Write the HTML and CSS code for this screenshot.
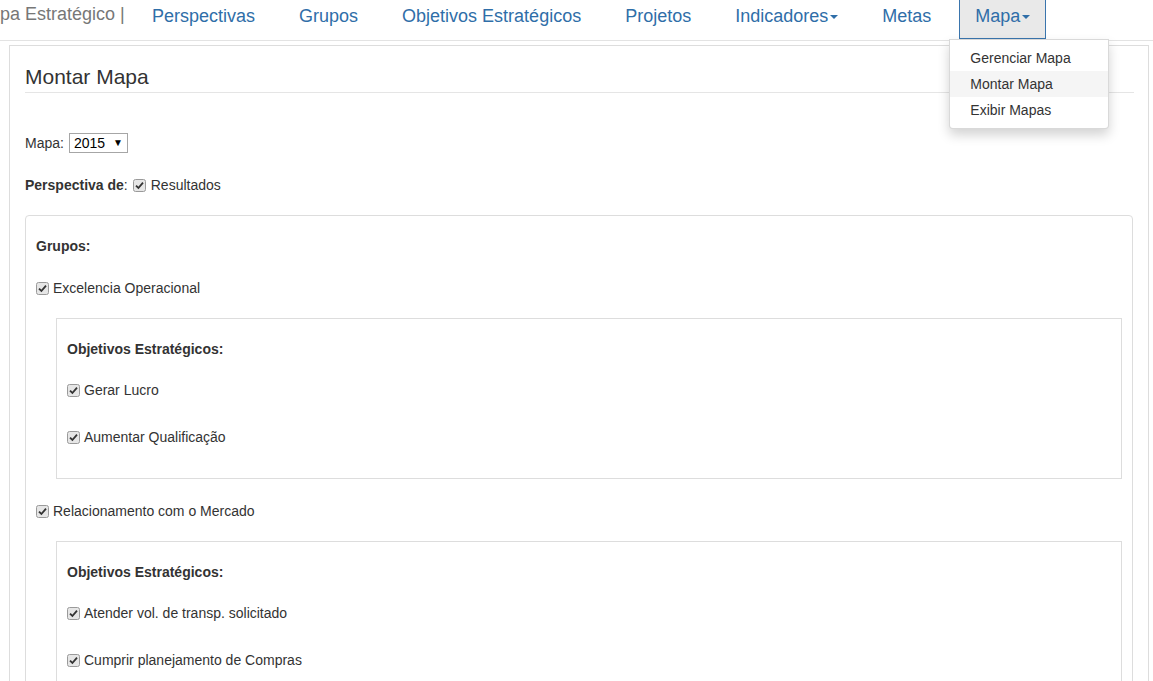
FILE: index.html
```html
<!DOCTYPE html>
<html lang="pt">
<head>
<meta charset="utf-8">
<title>Montar Mapa</title>
<link rel="stylesheet" href="styles.css">
</head>
<body>
<nav class="navbar">
  <span class="brand">pa Estratégico |</span>
  <ul class="nav">
    <li><a class="nav-link">Perspectivas</a></li>
    <li><a class="nav-link">Grupos</a></li>
    <li><a class="nav-link">Objetivos Estratégicos</a></li>
    <li><a class="nav-link">Projetos</a></li>
    <li><a class="nav-link">Indicadores<span class="caret"></span></a></li>
    <li><a class="nav-link">Metas</a></li>
    <li class="dropdown">
      <a class="nav-link active">Mapa<span class="caret"></span></a>
      <ul class="dropdown-menu">
        <li><a class="dd-item">Gerenciar Mapa</a></li>
        <li><a class="dd-item hover">Montar Mapa</a></li>
        <li><a class="dd-item">Exibir Mapas</a></li>
      </ul>
    </li>
  </ul>
</nav>

<main class="page">
  <div class="legend">Montar Mapa</div>

  <div class="field-row">
    <span>Mapa:</span>
    <span class="select-wrap">
      <select class="select"><option>2015</option></select>
    </span>
  </div>

  <div class="persp-row">
    <b>Perspectiva de</b><span>:</span>
    <svg class="cb cb-persp" viewBox="0 0 13 13" width="13" height="13"><rect x="0.5" y="0.5" width="12" height="12" rx="2" fill="#e6e6e6" stroke="#9a9a9a"/><path d="M3 6.6 L5.4 9 L10 3.6" fill="none" stroke="#333" stroke-width="1.8"/></svg>
    <span>Resultados</span>
  </div>

  <div class="panel">
    <div class="label-bold">Grupos:</div>

    <div class="check-row">
      <svg class="cb" viewBox="0 0 13 13" width="13" height="13"><rect x="0.5" y="0.5" width="12" height="12" rx="2" fill="#e6e6e6" stroke="#9a9a9a"/><path d="M3 6.6 L5.4 9 L10 3.6" fill="none" stroke="#333" stroke-width="1.8"/></svg>
      <span>Excelencia Operacional</span>
    </div>

    <div class="obj-box">
      <div class="label-bold">Objetivos Estratégicos:</div>
      <div class="check-row obj-first">
        <svg class="cb" viewBox="0 0 13 13" width="13" height="13"><rect x="0.5" y="0.5" width="12" height="12" rx="2" fill="#e6e6e6" stroke="#9a9a9a"/><path d="M3 6.6 L5.4 9 L10 3.6" fill="none" stroke="#333" stroke-width="1.8"/></svg>
        <span>Gerar Lucro</span>
      </div>
      <div class="check-row obj-next">
        <svg class="cb" viewBox="0 0 13 13" width="13" height="13"><rect x="0.5" y="0.5" width="12" height="12" rx="2" fill="#e6e6e6" stroke="#9a9a9a"/><path d="M3 6.6 L5.4 9 L10 3.6" fill="none" stroke="#333" stroke-width="1.8"/></svg>
        <span>Aumentar Qualificação</span>
      </div>
    </div>

    <div class="check-row">
      <svg class="cb" viewBox="0 0 13 13" width="13" height="13"><rect x="0.5" y="0.5" width="12" height="12" rx="2" fill="#e6e6e6" stroke="#9a9a9a"/><path d="M3 6.6 L5.4 9 L10 3.6" fill="none" stroke="#333" stroke-width="1.8"/></svg>
      <span>Relacionamento com o Mercado</span>
    </div>

    <div class="obj-box">
      <div class="label-bold">Objetivos Estratégicos:</div>
      <div class="check-row obj-first">
        <svg class="cb" viewBox="0 0 13 13" width="13" height="13"><rect x="0.5" y="0.5" width="12" height="12" rx="2" fill="#e6e6e6" stroke="#9a9a9a"/><path d="M3 6.6 L5.4 9 L10 3.6" fill="none" stroke="#333" stroke-width="1.8"/></svg>
        <span>Atender vol. de transp. solicitado</span>
      </div>
      <div class="check-row obj-next">
        <svg class="cb" viewBox="0 0 13 13" width="13" height="13"><rect x="0.5" y="0.5" width="12" height="12" rx="2" fill="#e6e6e6" stroke="#9a9a9a"/><path d="M3 6.6 L5.4 9 L10 3.6" fill="none" stroke="#333" stroke-width="1.8"/></svg>
        <span>Cumprir planejamento de Compras</span>
      </div>
    </div>
  </div>
</main>
</body>
</html>
```

FILE: styles.css
```css
html, body {
  margin: 0;
  padding: 0;
  background: #fff;
}

body {
  font-family: "Liberation Sans", Arial, sans-serif;
  font-size: 14px;
  line-height: 20px;
  color: #333;
}

/* ---------- navbar ---------- */
.navbar {
  display: flex;
  height: 40px;
  border-bottom: 1px solid #e3e3e3;
  background: #fff;
  position: relative;
  z-index: 10;
}

.brand {
  width: 136px;
  flex: none;
  font-size: 18px;
  line-height: 20px;
  padding-top: 4px;
  color: #777;
  white-space: nowrap;
  overflow: hidden;
}

.nav {
  display: flex;
  gap: 12px;
  list-style: none;
  margin: 0;
  padding: 0;
}

.nav > li {
  position: relative;
}

.nav-link {
  display: block;
  margin-top: -1px;
  padding: 6px 15px 12px;
  border: 1px solid transparent;
  font-size: 18px;
  line-height: 20px;
  color: #2f6ea8;
  white-space: nowrap;
  cursor: pointer;
}

.nav-link.active {
  background: #e9e9e9;
  border-color: #3a75ad;
}

.caret {
  display: inline-block;
  width: 0;
  height: 0;
  margin-left: 2px;
  vertical-align: middle;
  border-top: 4px solid;
  border-left: 4px solid transparent;
  border-right: 4px solid transparent;
}

.dropdown-menu {
  position: absolute;
  top: 39px;
  left: -10px;
  min-width: 160px;
  box-sizing: border-box;
  margin: 0;
  padding: 5px 0;
  list-style: none;
  background: #fff;
  border: 1px solid rgba(0, 0, 0, 0.15);
  border-radius: 0 0 4px 4px;
  box-shadow: 0 6px 12px rgba(0, 0, 0, 0.175);
}

.dd-item {
  display: block;
  padding: 3px 20px;
  line-height: 20px;
  font-size: 14px;
  color: #333;
  white-space: nowrap;
}

.dd-item.hover {
  background: #f5f5f5;
}

/* ---------- page ---------- */
.page {
  margin: 4px 4px 0 9px;
  border: 1px solid #ddd;
  border-bottom: none;
  padding: 16px 14px 40px 15px;
}

.legend {
  font-size: 21px;
  line-height: 30px;
  border-bottom: 1px solid #e5e5e5;
}

.field-row {
  display: flex;
  align-items: center;
  height: 20px;
  margin-top: 40px;
}

.select-wrap {
  position: relative;
  margin-left: 5px;
  display: inline-block;
  height: 20px;
}

.select-wrap::after {
  content: "▼";
  position: absolute;
  right: 5px;
  top: 0;
  font-size: 10px;
  line-height: 20px;
  color: #000;
  pointer-events: none;
}

.select {
  -webkit-appearance: none;
  appearance: none;
  box-sizing: border-box;
  width: 59px;
  height: 20px;
  margin: 0;
  padding: 0 0 0 4px;
  border: 1px solid #a6a6a6;
  border-radius: 0;
  background: #fff;
  font-family: "Liberation Sans", Arial, sans-serif;
  font-size: 14px;
  line-height: 18px;
  color: #000;
}

.persp-row {
  display: flex;
  align-items: center;
  margin-top: 22px;
  line-height: 20px;
}

.cb {
  flex: none;
  display: block;
  margin-right: 4px;
}

.cb-persp {
  margin-left: 5px;
  margin-right: 5px;
}

.panel {
  margin-top: 20px;
  margin-right: 1px;
  border: 1px solid #ddd;
  border-radius: 4px;
  padding: 0 10px 10px 10px;
}

.label-bold {
  font-weight: bold;
  margin-top: 20px;
  line-height: 20px;
}

.check-row {
  display: flex;
  align-items: center;
  margin-top: 22px;
  line-height: 20px;
}

.obj-box {
  margin: 20px 0 0 20px;
  border: 1px solid #ddd;
  padding: 0 10px 31px;
}

.obj-box > .check-row.obj-first {
  margin-top: 21px;
}

.obj-box > .check-row.obj-next {
  margin-top: 27px;
}
```
